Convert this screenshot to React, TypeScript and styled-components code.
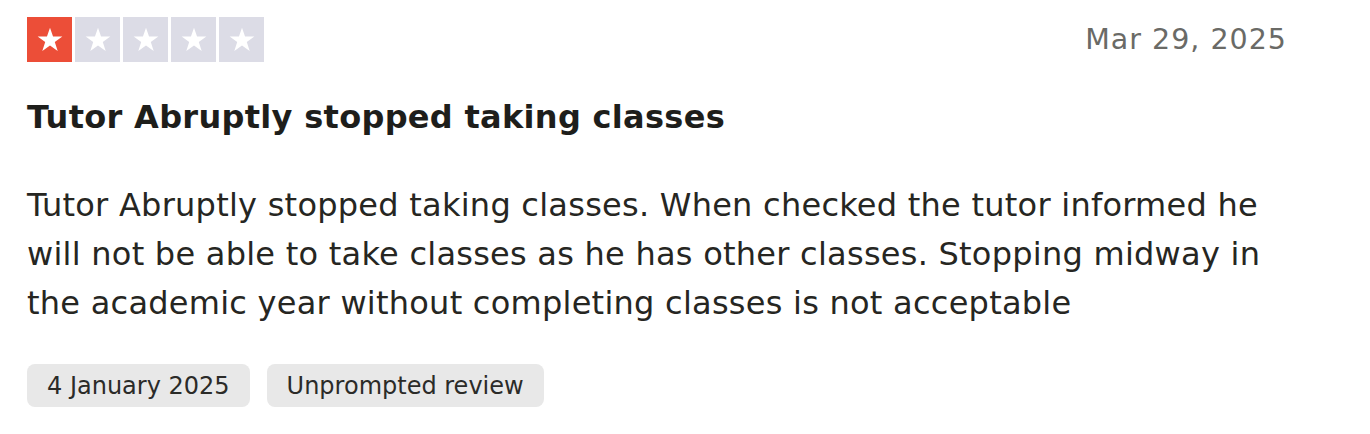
import React from "react";
import styled, { createGlobalStyle } from "styled-components";

const GlobalStyle = createGlobalStyle`
    html, body {
        margin: 0;
        padding: 0;
        background: #ffffff;
    }
    body {
        font-family: "DejaVu Sans", "Noto Sans", "Liberation Sans", sans-serif;
        color: #1c1c1c;
    }
`;

const Card = styled.article`
    width: 1260px;
    padding: 17px 0 0 27px;
    display: flex;
    flex-direction: column;
`;

const Header = styled.div`
    display: flex;
    justify-content: space-between;
    align-items: center;
`;

const Stars = styled.div`
    display: flex;
    gap: 3px;
`;

const StarBox = styled.div<{ $filled: boolean }>`
    width: 45px;
    height: 45px;
    background: ${(p) => (p.$filled ? "#ec4e38" : "#dcdce6")};
    display: flex;
    align-items: center;
    justify-content: center;
`;

const DateText = styled.time`
    font-size: 28.5px;
    line-height: 34px;
    letter-spacing: 1px;
    color: #6a6a66;
`;

const Title = styled.h2`
    margin: 34px 0 0;
    font-size: 32px;
    font-weight: 700;
    line-height: 42px;
    letter-spacing: 0.3px;
    color: #1e1e1b;
`;

const Body = styled.p`
    margin: 43px 0 0;
    font-size: 32px;
    line-height: 49px;
    letter-spacing: 0.25px;
    color: #262622;
`;

const Tags = styled.div`
    display: flex;
    gap: 17px;
    margin-top: 36px;
`;

const Tag = styled.span`
    background: #e8e8e8;
    border-radius: 8px;
    padding: 0 20px;
    height: 43px;
    display: flex;
    align-items: center;
    font-size: 24px;
    color: #2b2b28;
`;

const Star = () => (
    <svg width="28" height="28" viewBox="0 0 24 24">
        <path
            d="M12 1.5l2.6 7.6h8l-6.5 4.7 2.5 7.7L12 16.8l-6.6 4.7 2.5-7.7L1.4 9.1h8z"
            fill="#ffffff"
        />
    </svg>
);

const App = () => {
    const rating = 1;
    return (
        <>
            <GlobalStyle />
            <Card>
                <Header>
                    <Stars>
                        {[1, 2, 3, 4, 5].map((n) => (
                            <StarBox key={n} $filled={n <= rating}>
                                <Star />
                            </StarBox>
                        ))}
                    </Stars>
                    <DateText>Mar 29, 2025</DateText>
                </Header>
                <Title>Tutor Abruptly stopped taking classes</Title>
                <Body>
                    Tutor Abruptly stopped taking classes. When checked the tutor
                    informed he will not be able to take classes as he has other
                    classes. Stopping midway in the academic year without
                    completing classes is not acceptable
                </Body>
                <Tags>
                    <Tag>4 January 2025</Tag>
                    <Tag>Unprompted review</Tag>
                </Tags>
            </Card>
        </>
    );
};

export default App;
